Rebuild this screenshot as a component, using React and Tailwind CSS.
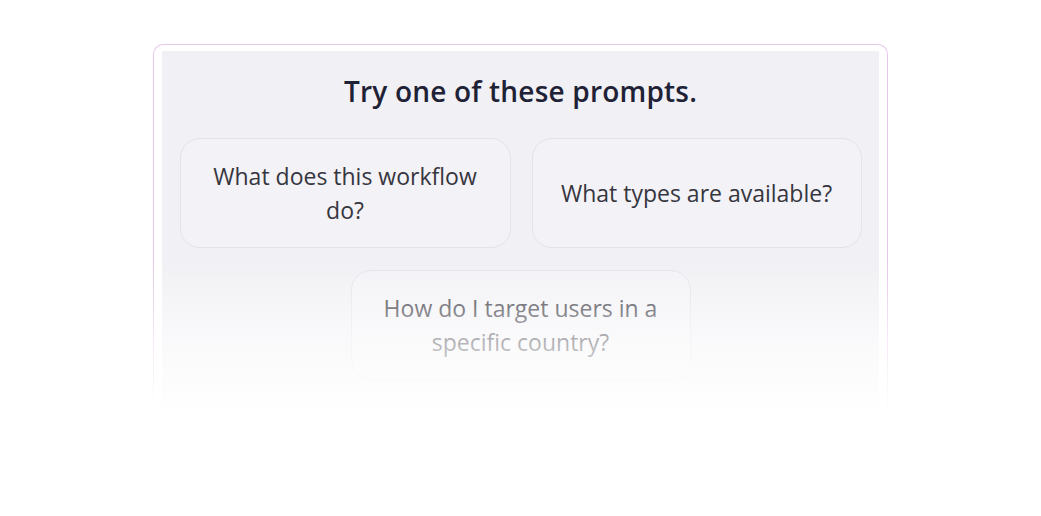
import { useState } from "react";

const prompts = [
    { text: "What does this workflow do?", width: "w-[331px]" },
    { text: "What types are available?", width: "w-[330px]" },
    { text: "How do I target users in a specific country?", width: "w-[340px]" },
];

function PromptCard({ text, width, onPick }) {
    return (
        <button
            onClick={() => onPick(text)}
            className={`${width} h-[110px] flex items-center justify-center px-[28px] rounded-[20px] border border-[#e4e3e9] bg-[#f3f2f6] text-[23px] leading-[34px] text-[#36363f] text-center`}
        >
            {text}
        </button>
    );
}

export default function App() {
    const [picked, setPicked] = useState(null);

    return (
        <div
            className="relative w-full h-[516px] bg-white overflow-hidden"
            style={{ fontFamily: "'Open Sans', Lato, sans-serif" }}
        >
            <div className="ml-[153px] mt-[44px] w-[735px] h-[380px] rounded-t-[10px] border border-b-0 border-[#e6c6ea] bg-white px-[8px] pt-[6px]">
                <div className="h-full bg-[#f1f0f4] px-[17px] pt-[22px]">
                    <h1 className="text-center text-[28px] leading-[36px] font-semibold tracking-[0.2px] text-[#1f2236]">
                        Try one of these prompts.
                    </h1>
                    <div className="mt-[29px] flex flex-wrap justify-center gap-x-[21px] gap-y-[22px]">
                        {prompts.map((p) => (
                            <PromptCard
                                key={p.text}
                                text={p.text}
                                width={p.width}
                                onPick={setPicked}
                            />
                        ))}
                    </div>
                </div>
            </div>

            {/* fade-out over the lower part of the card */}
            <div className="pointer-events-none absolute left-0 right-0 top-[262px] h-[150px] bg-gradient-to-b from-white/0 via-white/60 to-white" />
            <div className="pointer-events-none absolute left-0 right-0 top-[412px] bottom-0 bg-white" />
            {picked && <span className="sr-only">{picked}</span>}
        </div>
    );
}
